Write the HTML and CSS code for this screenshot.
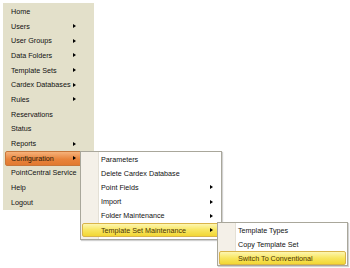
FILE: index.html
```html
<!DOCTYPE html>
<html lang="en">
<head>
    <meta charset="UTF-8">
    <title>PointCentral Menu</title>
    <link rel="stylesheet" href="styles.css">
</head>
<body>
    <div class="nav">
        <ul class="menu main-menu">
            <li class="item">Home</li>
            <li class="item">Users <i class="arrow"></i></li>
            <li class="item">User Groups <i class="arrow"></i></li>
            <li class="item">Data Folders <i class="arrow"></i></li>
            <li class="item">Template Sets <i class="arrow"></i></li>
            <li class="item">Cardex Databases <i class="arrow"></i></li>
            <li class="item">Rules <i class="arrow"></i></li>
            <li class="item">Reservations</li>
            <li class="item">Status</li>
            <li class="item">Reports <i class="arrow"></i></li>
            <li class="item active">Configuration <i class="arrow"></i></li>
            <li class="item">PointCentral Service</li>
            <li class="item">Help</li>
            <li class="item">Logout</li>
        </ul>

        <!-- Configuration submenu -->
        <ul class="menu popup config-menu">
            <li class="item">Parameters</li>
            <li class="item">Delete Cardex Database</li>
            <li class="item">Point Fields <i class="arrow"></i></li>
            <li class="item">Import <i class="arrow"></i></li>
            <li class="item">Folder Maintenance <i class="arrow"></i></li>
            <li class="item hover">Template Set Maintenance <i class="arrow"></i></li>
        </ul>

        <!-- Template Set Maintenance submenu -->
        <ul class="menu popup template-menu">
            <li class="item">Template Types</li>
            <li class="item">Copy Template Set</li>
            <li class="item hover">Switch To Conventional</li>
        </ul>
    </div>
</body>
</html>
```

FILE: styles.css
```css
body {
    margin: 0;
    background: #ffffff;
    font-family: "Liberation Sans", Arial, sans-serif;
    font-size: 7.2px;
    color: #111111;
}
.nav {
    position: relative;
    width: 350px;
    height: 268px;
    overflow: hidden;
}
.menu {
    list-style: none;
    margin: 0;
    padding: 0;
    box-sizing: border-box;
}
.item {
    display: flex;
    align-items: center;
    justify-content: space-between;
    box-sizing: border-box;
    white-space: nowrap;
    border: 1px solid transparent;
    border-radius: 2px;
}
.arrow {
    width: 0;
    height: 0;
    border-left: 3px solid #000000;
    border-top: 2.5px solid transparent;
    border-bottom: 2.5px solid transparent;
}

/* main menu */
.main-menu {
    margin: 3px 0 0 3px;
    width: 91px;
    height: 207px;
    padding-top: 1px;
    background: #e3e0ca;
}
.main-menu .item {
    height: 14.7px;
    margin: 0 2px;
    padding: 0 15px 0 5px;
}
.main-menu .item.active {
    background: linear-gradient(#f6b27a, #e8843c 55%, #e27a30);
    border-color: #c8773a;
    color: #2a1a08;
}

/* popups */
.popup {
    position: absolute;
    background: linear-gradient(90deg, #f4f0e8 17px, #e4e0d6 17px, #e4e0d6 18px, #ffffff 18px);
    border: 1px solid #a9a79b;
    box-shadow: 1px 1px 1px rgba(0, 0, 0, 0.18);
}
.popup .item {
    margin: 0 1px;
    padding: 0 6px 0 18px;
}
.popup .item.hover {
    background: linear-gradient(#fdf6b0, #f8e660 50%, #f2d734);
    border-color: #d9b44a;
    color: #4a3305;
}
.config-menu {
    left: 80px;
    top: 151px;
    width: 142px;
    height: 89px;
    padding-top: 0;
}
.config-menu .item {
    height: 14.2px;
}
.template-menu {
    left: 217px;
    top: 222px;
    width: 131px;
    height: 44px;
}
.template-menu .item {
    height: 14px;
}
```
